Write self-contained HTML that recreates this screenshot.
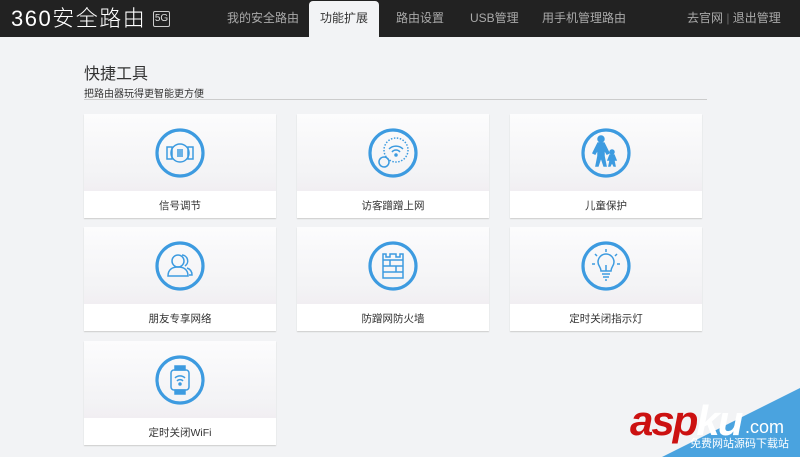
<!DOCTYPE html>
<html><head><meta charset="utf-8"><style>
*{margin:0;padding:0;box-sizing:border-box}
body{width:800px;height:457px;overflow:hidden;background:#f2f3f5;font-family:"Liberation Sans","Noto Sans CJK SC",sans-serif;position:relative}
.hd{position:absolute;left:0;top:0;width:800px;height:37px;background:#222}
.logo{position:absolute;left:11px;top:6px;color:#fff;font-size:22px;letter-spacing:1.5px;line-height:26px;font-weight:300}
.g5{position:absolute;left:153px;top:11px;width:17px;height:16px;border:1px solid #ccc;border-radius:2px;color:#ddd;font-size:10px;line-height:14px;text-align:center}
.nav{position:absolute;top:11px;color:#aaa;font-size:12px;line-height:14px}
.tab{position:absolute;left:309px;top:1px;width:70px;height:37px;background:#f2f3f5;border-radius:4px 4px 0 0;color:#333;font-size:12px;text-align:center;line-height:34px}
h1{position:absolute;left:84px;top:60px;font-size:16px;font-weight:normal;color:#333}
.sub{position:absolute;left:84px;top:85px;font-size:10px;color:#333;width:623px;border-bottom:1px solid #ccc;height:15px}
.card{position:absolute;width:192px;height:104px;background:#fff;box-shadow:0 1px 1px #ccc}
.card .top{height:77px;background:linear-gradient(#fcfcfd,#f3f3f5 80%,#f1eef2)}
.card .lb{text-align:center;font-size:10.5px;color:#333;line-height:30px}
.card svg{position:absolute;left:71px;top:14px}
</style></head><body>
<div class="hd">
<div class="logo">360安全路由</div><div class="g5">5G</div>
<div class="nav" style="left:227px">我的安全路由</div>
<div class="tab">功能扩展</div>
<div class="nav" style="left:396px">路由设置</div>
<div class="nav" style="left:470px">USB管理</div>
<div class="nav" style="left:542px">用手机管理路由</div>
<div class="nav" style="left:687px">去官网 <span style="color:#666">|</span> 退出管理</div>
</div>
<h1>快捷工具</h1>
<div class="sub">把路由器玩得更智能更方便</div>

<div class="card" style="left:84px;top:114px"><div class="top"></div><div class="lb">信号调节</div>
<svg width="50" height="50" viewBox="0 0 50 50" fill="none" stroke="#3d9be0" stroke-width="1.5"><circle cx="25" cy="25" r="23" stroke-width="3.2"/><circle cx="25" cy="25" r="9"/><rect x="12" y="19" width="5" height="12"/><rect x="33" y="19" width="5" height="12"/><path d="M23 21v8M25 21v8M27 21v8"/></svg></div>

<div class="card" style="left:297px;top:114px"><div class="top"></div><div class="lb">访客蹭蹭上网</div>
<svg width="50" height="50" viewBox="0 0 50 50" fill="none" stroke="#3d9be0" stroke-width="1.5"><circle cx="25" cy="25" r="23" stroke-width="3.2"/><circle cx="28" cy="22" r="12" stroke-dasharray="1.5 1.5"/><path d="M21 21a10 10 0 0 1 14 0M24 24a5 5 0 0 1 8 0"/><circle cx="28" cy="27" r="1" fill="#3d9be0"/><circle cx="16" cy="34" r="5"/></svg></div>

<div class="card" style="left:510px;top:114px"><div class="top"></div><div class="lb">儿童保护</div>
<svg width="50" height="50" viewBox="0 0 50 50" fill="#3d9be0" stroke="#3d9be0" stroke-width="1.5"><circle cx="25" cy="25" r="23" stroke-width="3.2" fill="none"/><circle cx="20" cy="11" r="3"/><path d="M17 15h6l5 10-2 1-3-5v7l2 10h-2l-3-9-3 9h-2l2-10v-7l-3 5-2-1z"/><circle cx="31" cy="24" r="2"/><path d="M29 27h4l2 5-1 0-1-2v3l1 5h-1l-2-4-2 4h-1l1-5v-3l-1 2-1 0z"/></svg></div>

<div class="card" style="left:84px;top:227px"><div class="top"></div><div class="lb">朋友专享网络</div>
<svg width="50" height="50" viewBox="0 0 50 50" fill="none" stroke="#3d9be0" stroke-width="1.5"><circle cx="25" cy="25" r="23" stroke-width="3.2"/><circle cx="23" cy="20" r="6"/><path d="M13 35c0-7 5-9 10-9s10 2 10 9z"/><path d="M27 14a6 6 0 0 1 3 11M32 27c3 1 5 3 5 7h-3"/></svg></div>

<div class="card" style="left:297px;top:227px"><div class="top"></div><div class="lb">防蹭网防火墙</div>
<svg width="50" height="50" viewBox="0 0 50 50" fill="none" stroke="#3d9be0" stroke-width="1.5"><circle cx="25" cy="25" r="23" stroke-width="3.2"/><path d="M15 13h3v3h4v-3h6v3h4v-3h3v24H15zM15 19h20M15 25h20M15 31h20M22 19v6M28 25v6"/></svg></div>

<div class="card" style="left:510px;top:227px"><div class="top"></div><div class="lb">定时关闭指示灯</div>
<svg width="50" height="50" viewBox="0 0 50 50" fill="none" stroke="#3d9be0" stroke-width="1.5"><circle cx="25" cy="25" r="23" stroke-width="3.2"/><path d="M20 30c0-4-3-5-3-9a8 8 0 0 1 16 0c0 4-3 5-3 9zM21 33h8M22 36h6M24 39h2M25 30v-6M25 8v3M14 13l2 2M36 13l-2 2M11 23h3M36 23h3"/></svg></div>

<div class="card" style="left:84px;top:341px"><div class="top"></div><div class="lb">定时关闭WiFi</div>
<svg width="50" height="50" viewBox="0 0 50 50" fill="none" stroke="#3d9be0" stroke-width="1.5"><circle cx="25" cy="25" r="23" stroke-width="3.2"/><rect x="16" y="15" width="18" height="20" rx="3"/><rect x="20" y="11" width="10" height="4" fill="#3d9be0"/><rect x="20" y="35" width="10" height="4" fill="#3d9be0"/><path d="M20 23a7 7 0 0 1 10 0M22 26a4 4 0 0 1 6 0"/><circle cx="25" cy="29" r="1" fill="#3d9be0"/></svg></div>

<svg style="position:absolute;left:0;top:0" width="800" height="457"><polygon points="800,388 800,457 662,457" fill="#4aa3df"/></svg>
<div style="position:absolute;left:630px;top:400px;font:bold italic 42px 'Liberation Sans',sans-serif;color:#cc1111;letter-spacing:-2px;line-height:42px">asp<span style="color:#fff">ku</span></div>
<div style="position:absolute;left:745px;top:418px;font-size:18px;color:#fff;line-height:18px">.com</div>
<div style="position:absolute;left:690px;top:437px;font-size:11px;color:#fff;line-height:14px">免费网站源码下载站</div>
</body></html>
